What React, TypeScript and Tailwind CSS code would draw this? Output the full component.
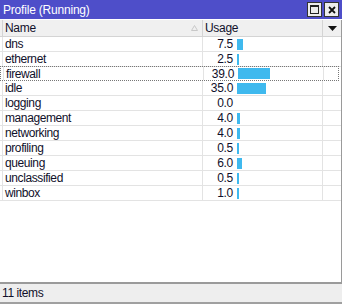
import React from 'react';

type Row = { name: string; usage: number };

const rows: Row[] = [
  { name: 'dns', usage: 7.5 },
  { name: 'ethernet', usage: 2.5 },
  { name: 'firewall', usage: 39.0 },
  { name: 'idle', usage: 35.0 },
  { name: 'logging', usage: 0.0 },
  { name: 'management', usage: 4.0 },
  { name: 'networking', usage: 4.0 },
  { name: 'profiling', usage: 0.5 },
  { name: 'queuing', usage: 6.0 },
  { name: 'unclassified', usage: 0.5 },
  { name: 'winbox', usage: 1.0 },
];

export default function App() {
  return (
    <div
      className="w-[342px] h-[304px] flex flex-col bg-white text-[11px] text-[#10102a] overflow-hidden"
      style={{ fontFamily: '"Liberation Sans", Arial, sans-serif' }}
    >
      {/* Title bar */}
      <div className="h-[19px] flex items-center bg-[#4e4ec9] pl-[3px] pr-[3px]">
        <span className="flex-1 text-white text-[12px] tracking-[-0.2px]">Profile (Running)</span>
        <div className="flex gap-[2px]">
          <div className="w-[15px] h-[15px] bg-[#ececec] border border-[#333] flex items-center justify-center">
            <div className="w-[9px] h-[9px] border border-[#222] border-t-2" />
          </div>
          <div className="w-[15px] h-[15px] bg-[#ececec] border border-[#333] flex items-center justify-center">
            <svg width="8" height="8" viewBox="0 0 8 8">
              <path d="M1 1 L7 7 M7 1 L1 7" stroke="#111" strokeWidth="1.8" />
            </svg>
          </div>
        </div>
      </div>

      {/* List area */}
      <div className="flex-1 flex flex-col mt-[1px] border-r border-[#9a9a9a] border-b-2 border-b-[#9a9a9a]">
        {/* Header */}
        <div className="h-[17px] flex bg-[#f0f0f0] border-b border-[#d4d4d4]">
          <div className="w-[3px] border-r border-[#d4d4d4]" />
          <div className="w-[200px] flex items-center pl-[2px] pr-[4px] border-r border-[#d4d4d4]">
            <span className="flex-1 text-[12px] tracking-[-0.3px]">Name</span>
            <svg width="7" height="6" viewBox="0 0 7 6">
              <path d="M3.5 0.5 L6.5 5.5 L0.5 5.5 Z" fill="none" stroke="#c8c8c8" strokeWidth="1" />
            </svg>
          </div>
          <div className="w-[120px] flex items-center pl-[2px] border-r border-[#d4d4d4]">
            <span className="text-[12px] tracking-[-0.3px]">Usage</span>
          </div>
          <div className="flex-1 flex items-center justify-center">
            <svg width="9" height="5" viewBox="0 0 9 5">
              <path d="M0 0 L9 0 L4.5 5 Z" fill="#111" />
            </svg>
          </div>
        </div>

        {/* Rows */}
        {rows.map((r) => {
          const w = r.usage > 0 ? Math.max(2, Math.round(r.usage * 0.82)) : 0;
          const focused = r.name === 'firewall';
          return (
            <div
              key={r.name}
              className={
                focused
                  ? 'h-[15px] flex border border-dotted border-[#777] -mt-px mr-[2px]'
                  : 'h-[15px] flex border-b border-[#e3e3e3]'
              }
            >
              <div className="w-[3px] border-r border-[#e3e3e3]" />
              <div className="w-[200px] flex items-center pl-[2px] border-r border-[#e3e3e3] text-[12px] tracking-[-0.4px]">
                {r.name}
              </div>
              <div className="w-[120px] flex items-center border-r border-[#e3e3e3]">
                <span className="w-[30px] text-right text-[12px] tracking-[-0.3px]">{r.usage.toFixed(1)}</span>
                <div className="ml-[4px] h-[11px] bg-[#3fb9ee]" style={{ width: w }} />
              </div>
              <div className="flex-1" />
            </div>
          );
        })}
        <div className="flex-1" />
      </div>

      {/* Status bar */}
      <div className="h-[20px] flex items-center bg-[#eeeeee] pl-[2px] border-b-2 border-[#a0a0a0]">
        <span className="text-[12px] tracking-[-0.4px]">11 items</span>
      </div>
    </div>
  );
}
